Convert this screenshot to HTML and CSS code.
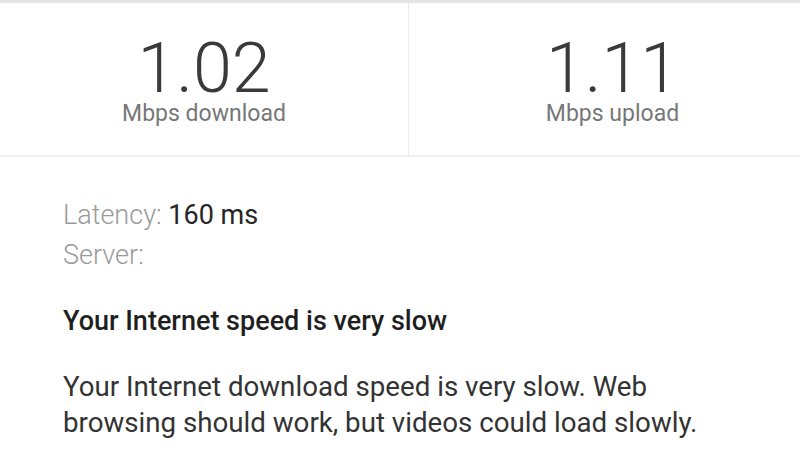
FILE: index.html
```html
<!DOCTYPE html>
<html lang="en">
<head>
<meta charset="utf-8">
<title>Speed test result</title>
<link rel="stylesheet" href="styles.css">
</head>
<body>
<div class="page">
  <section class="stats">
    <div class="stat">
      <div class="value">1.02</div>
      <div class="unit">Mbps download</div>
    </div>
    <div class="stat">
      <div class="value">1.11</div>
      <div class="unit">Mbps upload</div>
    </div>
  </section>
  <section class="details">
    <div class="meta">
      <div class="meta-row"><span class="meta-label">Latency:</span> <span class="meta-value">160 ms</span></div>
      <div class="meta-row"><span class="meta-label">Server:</span></div>
    </div>
    <h2 class="verdict">Your Internet speed is very slow</h2>
    <p class="explain">Your Internet download speed is very slow. Web browsing should work, but videos could load slowly.</p>
  </section>
</div>
</body>
</html>
```

FILE: styles.css
```css
html, body {
  margin: 0;
  padding: 0;
  background: #ffffff;
}
body {
  width: 800px;
  height: 460px;
  overflow: hidden;
  font-family: Roboto, "Noto Sans", Arial, sans-serif;
}
.page {
  width: 816px;
}
.stats {
  display: grid;
  grid-template-columns: 408px 408px;
  border-top: 3px solid #e4e4e4;
  border-bottom: 2px solid #f0f0f0;
}
.stat {
  display: flex;
  flex-direction: column;
  align-items: center;
  padding: 32px 0 28px;
}
.stat + .stat {
  border-left: 1px solid #ececec;
}
.value {
  font-size: 70px;
  font-weight: 300;
  line-height: 66px;
  color: #3a3a3a;
}
.unit {
  font-size: 23px;
  line-height: 26px;
  color: #777777;
}
.details {
  padding: 38px 0 0 63px;
}
.meta-row {
  font-size: 27px;
  line-height: 40px;
}
.meta-label {
  font-weight: 300;
  color: #9a9a9a;
}
.meta-value {
  color: #262626;
}
.verdict {
  margin: 30px 0 0;
  font-size: 27px;
  font-weight: 500;
  line-height: 32px;
  color: #1f1f1f;
}
.explain {
  margin: 32px 0 0;
  width: 660px;
  font-size: 27.7px;
  line-height: 36px;
  color: #333333;
}
```
